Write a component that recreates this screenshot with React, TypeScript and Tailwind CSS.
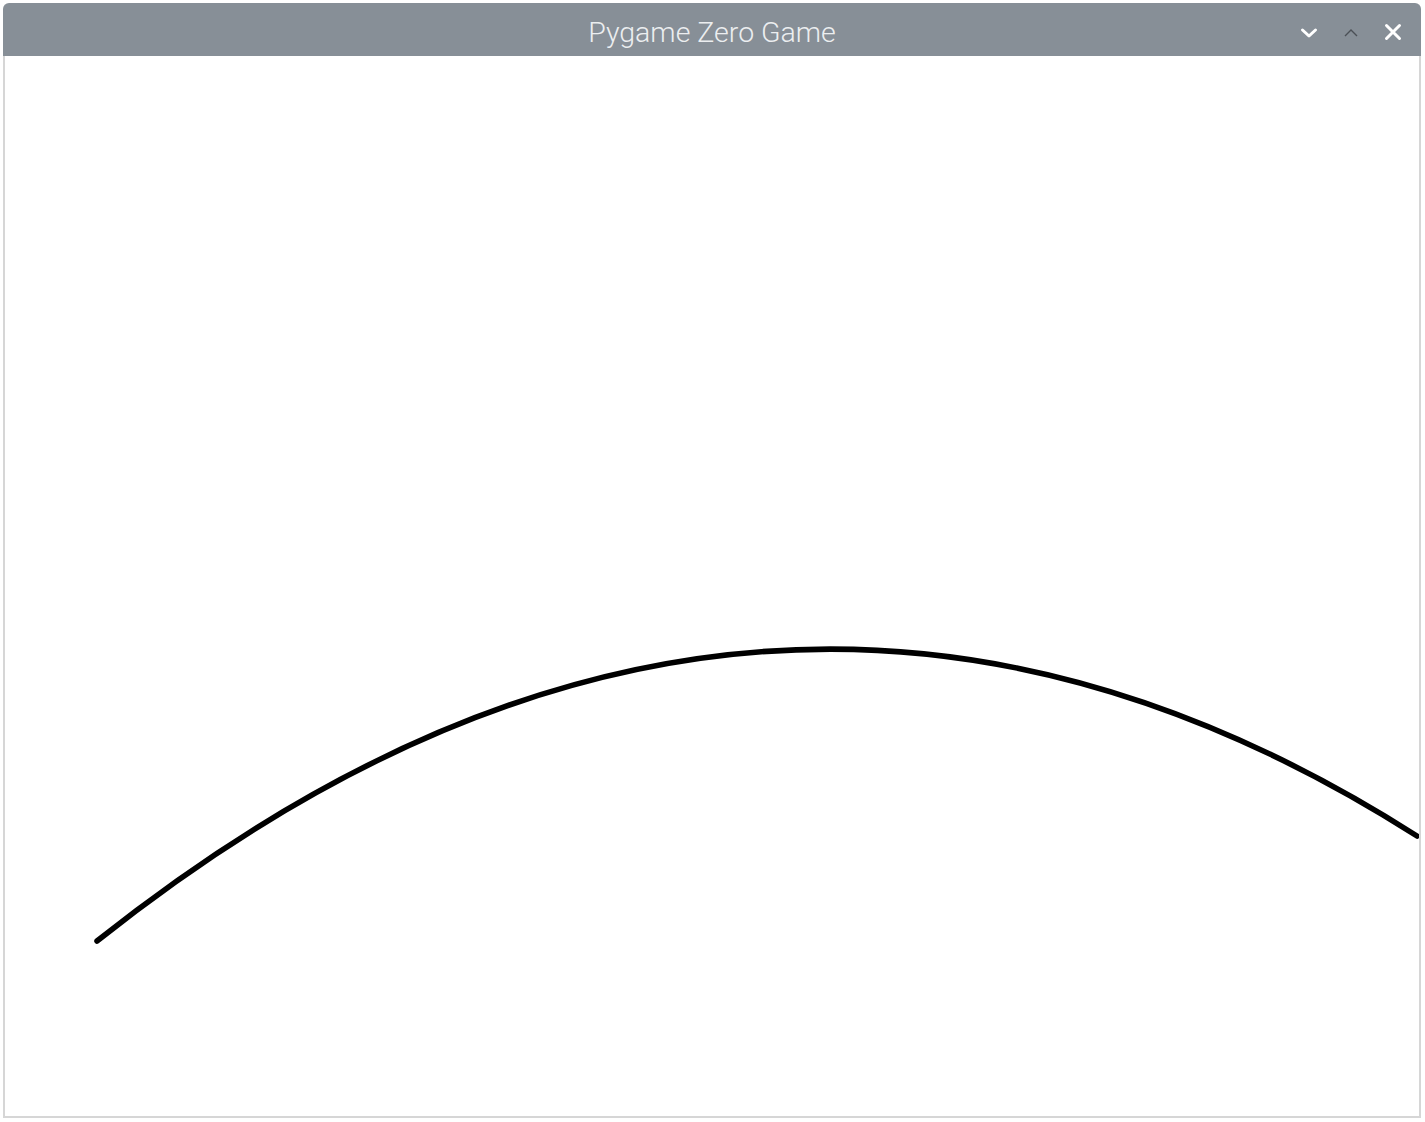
export default function App() {
  return (
    <div className="w-[1425px] h-[1122px] bg-white pt-[3px] pl-[3px]">
      <div className="w-[1418px] h-[1115px] flex flex-col rounded-t-[6px] overflow-hidden">
        {/* title bar */}
        <div className="relative h-[53px] shrink-0 bg-[#878f97] flex items-center justify-center">
          <div className="font-['Roboto',sans-serif] font-light text-[28.5px] text-[#eceef0] pt-[8px]">
            Pygame Zero Game
          </div>
          <div className="absolute right-0 top-0 h-full flex items-center pt-[5px]">
            <svg width="18" height="12" viewBox="0 0 18 12" className="mr-[25px] mt-[1px]">
              <path d="M2.5 3 L9 9 L15.5 3" stroke="#ffffff" strokeWidth="3" fill="none" strokeLinecap="round" strokeLinejoin="round" />
            </svg>
            <svg width="16" height="10" viewBox="0 0 16 10" className="mr-[25px] mt-[1px]">
              <path d="M2 8 L8 2 L14 8" stroke="#4b5056" strokeWidth="1.4" fill="none" />
            </svg>
            <svg width="18" height="18" viewBox="0 0 18 18" className="mr-[19px]">
              <path d="M2.5 2.5 L15.5 15.5 M15.5 2.5 L2.5 15.5" stroke="#ffffff" strokeWidth="3" strokeLinecap="round" />
            </svg>
          </div>
        </div>
        {/* canvas */}
        <div className="relative flex-1 bg-white border-2 border-t-0 border-[#d6d6d6]">
          <svg className="absolute inset-0 w-full h-full" viewBox="5 56 1414 1060" preserveAspectRatio="none">
            <path
              d="M97 941 Q757 415.6 1417 836"
              stroke="#000000"
              strokeWidth="5.5"
              fill="none"
              strokeLinecap="round"
            />
          </svg>
        </div>
      </div>
    </div>
  );
}
